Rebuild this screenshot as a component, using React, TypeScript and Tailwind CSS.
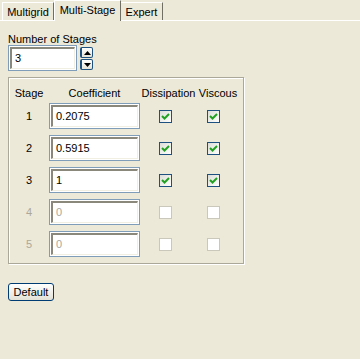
import React from "react";

const rows = [
  { n: "1", v: "0.2075", on: true },
  { n: "2", v: "0.5915", on: true },
  { n: "3", v: "1", on: true },
  { n: "4", v: "0", on: false },
  { n: "5", v: "0", on: false },
];

function Field({ value, w, disabled }: { value: string; w: string; disabled?: boolean }) {
  return (
    <div className={`${w} h-[26px] border border-[#7F9DB9] bg-white p-px`}>
      <div className="h-full border-t-2 border-l-2 border-t-[#8A887A] border-l-[#8A887A] border-b border-r border-b-[#F1EFE2] border-r-[#F1EFE2] bg-white pl-[3px] pt-[3px]">
        <span className={disabled ? "text-[#ACA899]" : "text-black"}>{value}</span>
      </div>
    </div>
  );
}

function Check({ on }: { on: boolean }) {
  if (!on) return <div className="w-[13px] h-[13px] border border-[#CAC8BB] bg-white" />;
  return (
    <div className="w-[13px] h-[13px] border border-[#1C5180] bg-gradient-to-br from-[#DCDCD7] to-white flex items-center justify-center">
      <svg width="9" height="9" viewBox="0 0 9 9">
        <path d="M1 4 L3.5 6.5 L8 2" stroke="#21A121" strokeWidth="2" fill="none" />
      </svg>
    </div>
  );
}

function Spin({ up }: { up: boolean }) {
  return (
    <div className="w-[13px] h-[11px] border border-[#1C5180] border-l-2 rounded-[2px] bg-gradient-to-b from-white to-[#E6E4D8] flex items-center justify-center">
      <svg width="7" height="4" viewBox="0 0 7 4">
        <path d={up ? "M0 4 L3.5 0 L7 4 Z" : "M0 0 L3.5 4 L7 0 Z"} fill="black" />
      </svg>
    </div>
  );
}

export default function App() {
  return (
    <div className="w-[360px] h-[359px] bg-[#ECE9D8] text-[11px] leading-[13px] text-black" style={{ fontFamily: '"Liberation Sans", Arial, sans-serif' }}>
      <div className="flex items-end h-[21px] pl-[2px] border-b border-white">
        <div className="w-[52px] h-[18px] border-t border-l border-white border-r border-r-[#716F64] flex items-center justify-center pt-[1px]">Multigrid</div>
        <div className="w-[67px] h-[21px] -mb-px bg-[#ECE9D8] border-t border-l border-white border-r border-r-[#716F64] flex items-center justify-center pb-[2px]">Multi-Stage</div>
        <div className="w-[42px] h-[18px] border-t border-white border-r border-r-[#716F64] flex items-center justify-center pt-[1px]">Expert</div>
      </div>

      <div className="pl-[8px]">
        <div className="mt-[12px] h-[12px]">Number of Stages</div>
        <div className="flex items-start">
          <Field value="3" w="w-[69px]" />
          <div className="ml-[3px] mt-[2px] flex flex-col gap-[1px]">
            <Spin up />
            <Spin up={false} />
          </div>
        </div>

        <div className="mt-[6px] w-[236px] h-[187px] border border-[#ACA899] shadow-[1px_1px_0_#fff,inset_1px_1px_0_#fff]">
          <div className="grid grid-cols-[40px_91px_57px_42px] gap-y-[6px] pt-[9px]">
            <div className="text-center h-[10px]">Stage</div>
            <div className="text-center h-[10px]">Coefficient</div>
            <div className="text-center h-[10px]">Dissipation</div>
            <div className="text-center h-[10px]">Viscous</div>
            {rows.map((r) => (
              <React.Fragment key={r.n}>
                <div className={`flex items-center justify-center h-[26px] ${r.on ? "text-black" : "text-[#ACA899]"}`}>{r.n}</div>
                <Field value={r.v} w="w-[91px]" disabled={!r.on} />
                <div className="flex items-center pl-[19px]"><Check on={r.on} /></div>
                <div className="flex items-center pl-[10px]"><Check on={r.on} /></div>
              </React.Fragment>
            ))}
          </div>
        </div>

        <button className="mt-[19px] w-[46px] h-[18px] border border-[#003C74] rounded-[3px] bg-gradient-to-b from-white to-[#E3E1D6] flex items-center justify-center">
          Default
        </button>
      </div>
    </div>
  );
}
